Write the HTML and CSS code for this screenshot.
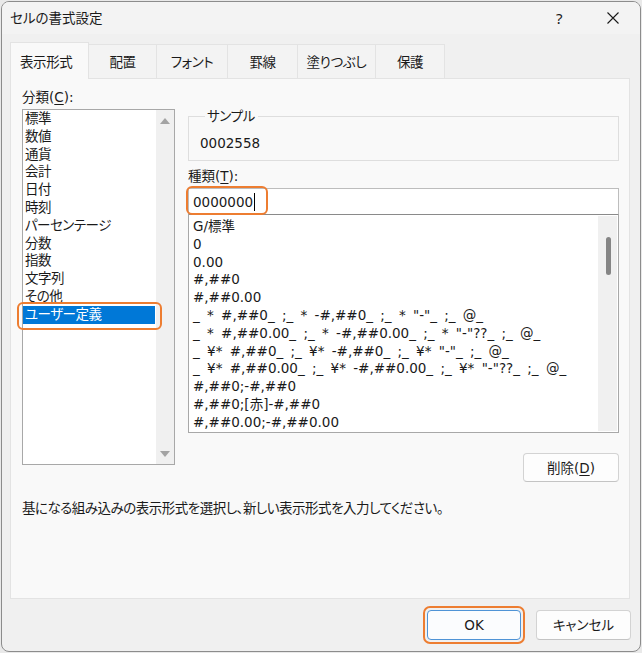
FILE: index.html
```html
<!DOCTYPE html>
<html lang="ja">
<head>
<meta charset="utf-8">
<title>セルの書式設定</title>
<link rel="stylesheet" href="styles.css">
</head>
<body>
<div class="window">
  <div class="titlebar">
    <span class="title">セルの書式設定</span>
    <span class="help">?</span>
    <span class="close"><svg width="12" height="12" viewBox="0 0 12 12"><path d="M0.5 0.5 L11.5 11.5 M11.5 0.5 L0.5 11.5" stroke="#1a1a1a" stroke-width="1.1" fill="none"/></svg></span>
  </div>
  <div class="tabs">
    <div class="tab t1 active">表示形式</div>
    <div class="tab t2">配置</div>
    <div class="tab t3">フォント</div>
    <div class="tab t4">罫線</div>
    <div class="tab t5">塗りつぶし</div>
    <div class="tab t6">保護</div>
  </div>
  <div class="panel">
    <div class="columns">
      <div class="leftcol">
        <div class="label">分類(<u>C</u>):</div>
        <div class="catbox">
          <ul class="catlist">
            <li>標準</li>
            <li>数値</li>
            <li>通貨</li>
            <li>会計</li>
            <li>日付</li>
            <li>時刻</li>
            <li>パーセンテージ</li>
            <li>分数</li>
            <li>指数</li>
            <li>文字列</li>
            <li>その他</li>
            <li class="selected">ユーザー定義</li>
          </ul>
          <div class="vscroll">
            <span class="arrow up"></span>
            <span class="arrow down"></span>
          </div>
          <span class="mark mark-cat"></span>
        </div>
      </div>
      <div class="rightcol">
        <fieldset class="sample">
          <legend>サンプル</legend>
          <div class="sample-value">0002558</div>
        </fieldset>
        <div class="label type-label">種類(<u>T</u>):</div>
        <div class="inputbox">
          <span class="input-text">0000000</span><span class="caret"></span>
          <span class="mark mark-input"></span>
        </div>
        <div class="fmtbox">
          <ul class="fmtlist">
            <li>G/標準</li>
            <li>0</li>
            <li>0.00</li>
            <li>#,##0</li>
            <li>#,##0.00</li>
            <li>_ * #,##0_ ;_ * -#,##0_ ;_ * "-"_ ;_ @_</li>
            <li>_ * #,##0.00_ ;_ * -#,##0.00_ ;_ * "-"??_ ;_ @_</li>
            <li>_ ¥* #,##0_ ;_ ¥* -#,##0_ ;_ ¥* "-"_ ;_ @_</li>
            <li>_ ¥* #,##0.00_ ;_ ¥* -#,##0.00_ ;_ ¥* "-"??_ ;_ @_</li>
            <li>#,##0;-#,##0</li>
            <li>#,##0;[赤]-#,##0</li>
            <li>#,##0.00;-#,##0.00</li>
          </ul>
          <div class="vscroll2"><span class="thumb"></span></div>
        </div>
        <div class="delete-row">
          <button class="btn delete">削除(<u>D</u>)</button>
        </div>
      </div>
    </div>
    <p class="desc">基になる組み込みの表示形式を選択し、新しい表示形式を入力してください。</p>
  </div>
  <div class="footer">
    <span class="ok-mark"><button class="btn ok">OK</button></span>
    <button class="btn cancel">キャンセル</button>
  </div>
</div>
</body>
</html>
```
FILE: styles.css
```css
* { box-sizing: border-box; }
html, body { margin: 0; padding: 0; }
body {
  background: #e9e9e9;
  font-family: "DejaVu Sans", "Noto Sans CJK JP", sans-serif;
  font-size: 13.5px;
  color: #1a1a1a;
  font-feature-settings: "palt";
}
u { text-decoration-thickness: 1px; text-underline-offset: 2px; }

.window {
  margin: 1px 0 0 1px;
  width: 640px;
  height: 651px;
  border: 1px solid #8c8c8c;
  border-radius: 8px;
  background: #f0f0f0;
  display: flex;
  flex-direction: column;
  overflow: hidden;
}

.titlebar {
  height: 32px;
  display: flex;
  align-items: center;
  padding-left: 8px;
  background: #f3f3f3;
}
.title { flex: 1; line-height: 20px; }
.help { width: 16px; margin-right: 35px; font-family: "Noto Sans", sans-serif; font-size: 15px; line-height: 20px; }
.close { width: 12px; height: 12px; margin-right: 21px; display: flex; }

.tabs {
  margin-top: 10px;
  padding-left: 8px;
  display: flex;
  height: 34px;
  position: relative;
  z-index: 1;
  letter-spacing: -0.4px;
}
.tab {
  height: 34px;
  border: 1px solid #e3e3e3;
  border-left: none;
  border-bottom: none;
  background: #f3f3f3;
  display: flex;
  align-items: center;
  justify-content: center;
  line-height: 20px;
}
.tab.active {
  border-left: 1px solid #e3e3e3;
  background: #f9f9f9;
  height: 37px;
  margin-top: -2px;
  padding-top: 2px;
  justify-content: flex-start;
  padding-left: 9px;
}
.t1 { width: 79px; }
.t2 { width: 68px; }
.t3 { width: 71px; }
.t4 { width: 70px; }
.t5 { width: 78px; }
.t6 { width: 69px; }

.panel {
  margin-left: 8px;
  width: 620px;
  height: 521px;
  border: 1px solid #e3e3e3;
  background: #f9f9f9;
  padding: 0 10px 0 11px;
}

.columns {
  display: flex;
  gap: 13px;
}
.leftcol { width: 153px; }
.rightcol { width: 431px; }

.label { line-height: 20px; }
.leftcol .label { margin-top: 8px; }

.catbox {
  margin-top: 2px;
  height: 356px;
  border: 1px solid #a8a8a8;
  background: #fff;
  display: flex;
  position: relative;
}
.catlist {
  list-style: none;
  margin: 0;
  padding: 0;
  flex: 1;
  letter-spacing: -0.5px;
}
.catlist li {
  line-height: 17.8px;
  height: 17.8px;
  padding-left: 2px;
  white-space: nowrap;
}
.catlist li.selected {
  background: #0078d7;
  color: #fff;
  margin-right: 1px;
}
.vscroll {
  width: 18px;
  background: #f0f0f0;
  display: flex;
  flex-direction: column;
  justify-content: space-between;
  align-items: center;
  padding: 8px 0 7px;
}
.arrow {
  width: 0; height: 0;
  border-left: 5px solid transparent;
  border-right: 5px solid transparent;
}
.arrow.up { border-bottom: 6px solid #a3a3a3; }
.arrow.down { border-top: 6px solid #a3a3a3; }

.mark {
  position: absolute;
  border: 2.5px solid #ed7d31;
  border-radius: 6px;
  pointer-events: none;
}
.mark-cat { left: -6px; top: 192px; width: 145px; height: 28px; }

.sample {
  margin: 27px 0 0 0;
  padding: 7px 10px 7px 11px;
  border: 1px solid #dedede;
  min-width: 0;
}
.sample legend {
  padding: 0 3px 0 2px;
  margin-left: 5px;
  line-height: 20px;
  letter-spacing: -0.4px;
}
.sample-value { line-height: 20px; }

.type-label { margin-top: 5px; }

.inputbox {
  margin-top: 2px;
  height: 27px;
  border: 1px solid #bdbdbd;
  border-bottom: 1px solid #8a8a8a;
  background: #fff;
  display: flex;
  align-items: center;
  padding-left: 4px;
  position: relative;
}
.input-text { line-height: 20px; }
.caret { width: 1px; height: 18px; background: #000; margin-left: 1px; }
.mark-input { left: -3px; top: -3px; width: 82px; height: 29px; }

.fmtbox {
  height: 218px;
  border: 1px solid #a8a8a8;
  border-top: none;
  background: #fff;
  display: flex;
  padding: 0 1px 1px 0;
}
.fmtlist {
  list-style: none;
  margin: 0;
  padding: 3px 0 0 4px;
  flex: 1;
  overflow: hidden;
  word-spacing: 3px;
}
.fmtlist li {
  line-height: 17.8px;
  height: 17.8px;
  white-space: pre;
}
.vscroll2 {
  width: 19px;
  margin-top: 1px;
  background: #f0f0f0;
  display: flex;
  justify-content: center;
  padding-top: 21px;
  padding-left: 1px;
}
.thumb {
  width: 5px;
  height: 38px;
  border-radius: 3px;
  background: #858585;
}

.delete-row {
  display: flex;
  justify-content: flex-end;
  margin-top: 20px;
}
.btn {
  font-family: "DejaVu Sans", "Noto Sans CJK JP", sans-serif;
  font-size: 13.5px;
  color: #1a1a1a;
  font-feature-settings: "palt";
  background: #fdfdfd;
  border: 1px solid #d3d3d3;
  border-bottom-color: #c4c4c4;
  border-radius: 4px;
  padding: 0;
  line-height: 20px;
}
.delete { width: 96px; height: 29px; }

.desc {
  margin: 16px 0 0 0;
  line-height: 20px;
  letter-spacing: -0.5px;
}

.footer {
  flex: 1;
  display: flex;
  justify-content: flex-end;
  align-items: center;
  padding-right: 9px;
  gap: 11px;
}
.ok-mark {
  display: flex;
  border: 2.5px solid #ed7d31;
  border-radius: 7px;
  padding: 2px;
}
.ok {
  width: 94px;
  height: 30px;
  border: 1px solid #4f93d6;
  background: #fbfcfe;
}
.cancel { width: 95px; height: 30px; }
```
